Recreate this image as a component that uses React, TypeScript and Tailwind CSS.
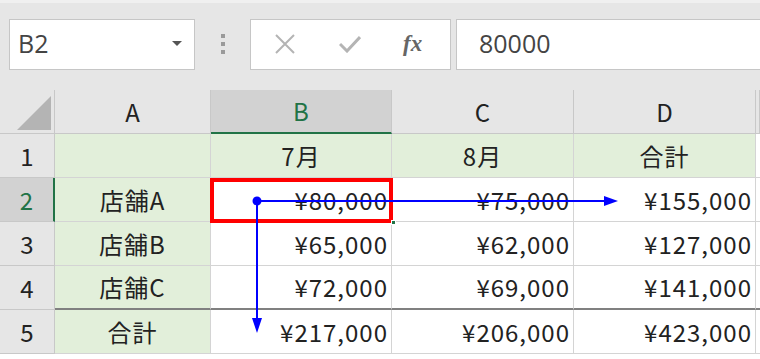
import React from 'react';

const font = { fontFamily: '"Noto Sans CJK JP", "Noto Sans", sans-serif' };
const uiFont = { fontFamily: '"Open Sans", "Liberation Sans", sans-serif' };

type Row = { num: string; label: string; b: string; c: string; d: string; selected?: boolean; thickBottom?: boolean; header?: boolean };

const rows: Row[] = [
    { num: '1', label: '', b: '7月', c: '8月', d: '合計', header: true },
    { num: '2', label: '店舗A', b: '¥80,000', c: '¥75,000', d: '¥155,000', selected: true },
    { num: '3', label: '店舗B', b: '¥65,000', c: '¥62,000', d: '¥127,000' },
    { num: '4', label: '店舗C', b: '¥72,000', c: '¥69,000', d: '¥141,000', thickBottom: true },
    { num: '5', label: '合計', b: '¥217,000', c: '¥206,000', d: '¥423,000' },
];

function FormulaBar() {
    return (
        <div className="h-[90px] bg-[#e6e6e6] border-t-[3px] border-t-[#f0f0f0] flex items-center pb-[5px]" style={uiFont}>
            {/* Name box */}
            <div className="ml-[9px] w-[186px] h-[51px] bg-white border border-[#c6c6c6] flex items-center justify-between pl-[8px] pr-[12px]">
                <span className="text-[25px] text-[#444]">B2</span>
                <svg width="10" height="6" viewBox="0 0 10 6"><path d="M0 0h10L5 5z" fill="#555" /></svg>
            </div>
            {/* Dots */}
            <div className="w-[55px] flex flex-col items-center gap-[4px]">
                <div className="w-[4px] h-[4px] bg-[#9a9a9a]" />
                <div className="w-[4px] h-[4px] bg-[#9a9a9a]" />
                <div className="w-[4px] h-[4px] bg-[#9a9a9a]" />
            </div>
            {/* Cancel / Enter / fx */}
            <div className="w-[201px] h-[51px] bg-white border border-[#c6c6c6] flex items-center">
                <svg className="ml-[23px]" width="22" height="22" viewBox="0 0 22 22">
                    <path d="M2 2L20 20M20 2L2 20" stroke="#b4b4b4" strokeWidth="2" />
                </svg>
                <svg className="ml-[43px]" width="22" height="18" viewBox="0 0 22 18">
                    <path d="M1 9L8 16L21 2" stroke="#b4b4b4" strokeWidth="3" fill="none" />
                </svg>
                <span className="ml-[42px] text-[23px] italic font-bold text-[#666]" style={{ fontFamily: '"Liberation Serif", serif' }}>fx</span>
            </div>
            {/* Formula input */}
            <div className="ml-[5px] flex-1 h-[51px] bg-white border border-[#c6c6c6] border-r-0 flex items-center pl-[22px]">
                <span className="text-[25px] text-[#444]">80000</span>
            </div>
        </div>
    );
}

function Sheet() {
    const hdr = 'h-[44px] bg-[#e6e6e6] border-r border-b border-[#c8c8c8] flex items-center justify-center text-[24px] text-[#222]';
    const cell = 'flex items-center text-[24px] text-[#222] tracking-[1px] border-r border-r-[#d4d4d4]';
    return (
        <div className="grid grid-cols-[55px_156px_181px_182px_182px_1fr] auto-rows-[44px]" style={font}>
            {/* column headers */}
            <div className="h-[44px] bg-[#e6e6e6] border-r border-b border-[#c8c8c8] flex items-end justify-end pr-[3px] pb-[3px]">
                <svg width="34" height="34" viewBox="0 0 34 34"><path d="M34 0V34H0z" fill="#b4b4b4" /></svg>
            </div>
            <div className={hdr}>A</div>
            <div className="h-[44px] bg-[#d2d2d2] border-r border-[#c8c8c8] border-b-2 border-b-[#217346] flex items-center justify-center text-[24px] text-[#217346]">B</div>
            <div className={hdr}>C</div>
            <div className={hdr}>D</div>
            <div className={hdr} />

            {rows.map((r) => {
                const bottom = r.thickBottom ? 'border-b-2 border-b-[#808080]' : 'border-b border-b-[#d4d4d4]';
                const num = r.selected
                    ? 'bg-[#d2d2d2] text-[#217346] border-r-2 border-r-[#217346]'
                    : 'bg-[#e6e6e6] text-[#222] border-r border-r-[#c8c8c8]';
                const body = r.header ? 'bg-[#e2efda] justify-center' : 'bg-white justify-end pr-[3px]';
                return (
                    <React.Fragment key={r.num}>
                        <div className={`${num} border-b border-b-[#c8c8c8] flex items-center justify-center text-[24px]`}>{r.num}</div>
                        <div className={`bg-[#e2efda] ${cell} ${bottom} justify-center`}>{r.label}</div>
                        <div className={`${body} ${cell} ${bottom}`}>{r.b}</div>
                        <div className={`${body} ${cell} ${bottom}`}>{r.c}</div>
                        <div className={`${body} ${cell} ${bottom}`}>{r.d}</div>
                        <div className={`bg-white ${bottom}`} />
                    </React.Fragment>
                );
            })}
        </div>
    );
}

export default function App() {
    return (
        <div className="relative w-[760px] h-[359px] overflow-hidden bg-white">
            <FormulaBar />
            <Sheet />

            {/* Selected cell outline */}
            <div className="absolute left-[210px] top-[178px] w-[183px] h-[45px] border-4 border-[#ff0000] pointer-events-none" />
            <div className="absolute left-[391px] top-[220px] w-[5px] h-[5px] bg-[#217346] border border-white" />

            {/* Reference arrows */}
            <svg className="absolute inset-0 pointer-events-none" width="760" height="359" viewBox="0 0 760 359">
                <line x1="257" y1="201" x2="607" y2="201" stroke="#0000ff" strokeWidth="2" />
                <path d="M604 196L618 201L604 206z" fill="#0000ff" />
                <line x1="257" y1="201" x2="257" y2="320" stroke="#0000ff" strokeWidth="2" />
                <path d="M252 318L257 333L262 318z" fill="#0000ff" />
                <circle cx="257" cy="201" r="4.5" fill="#0000ff" />
            </svg>
        </div>
    );
}
